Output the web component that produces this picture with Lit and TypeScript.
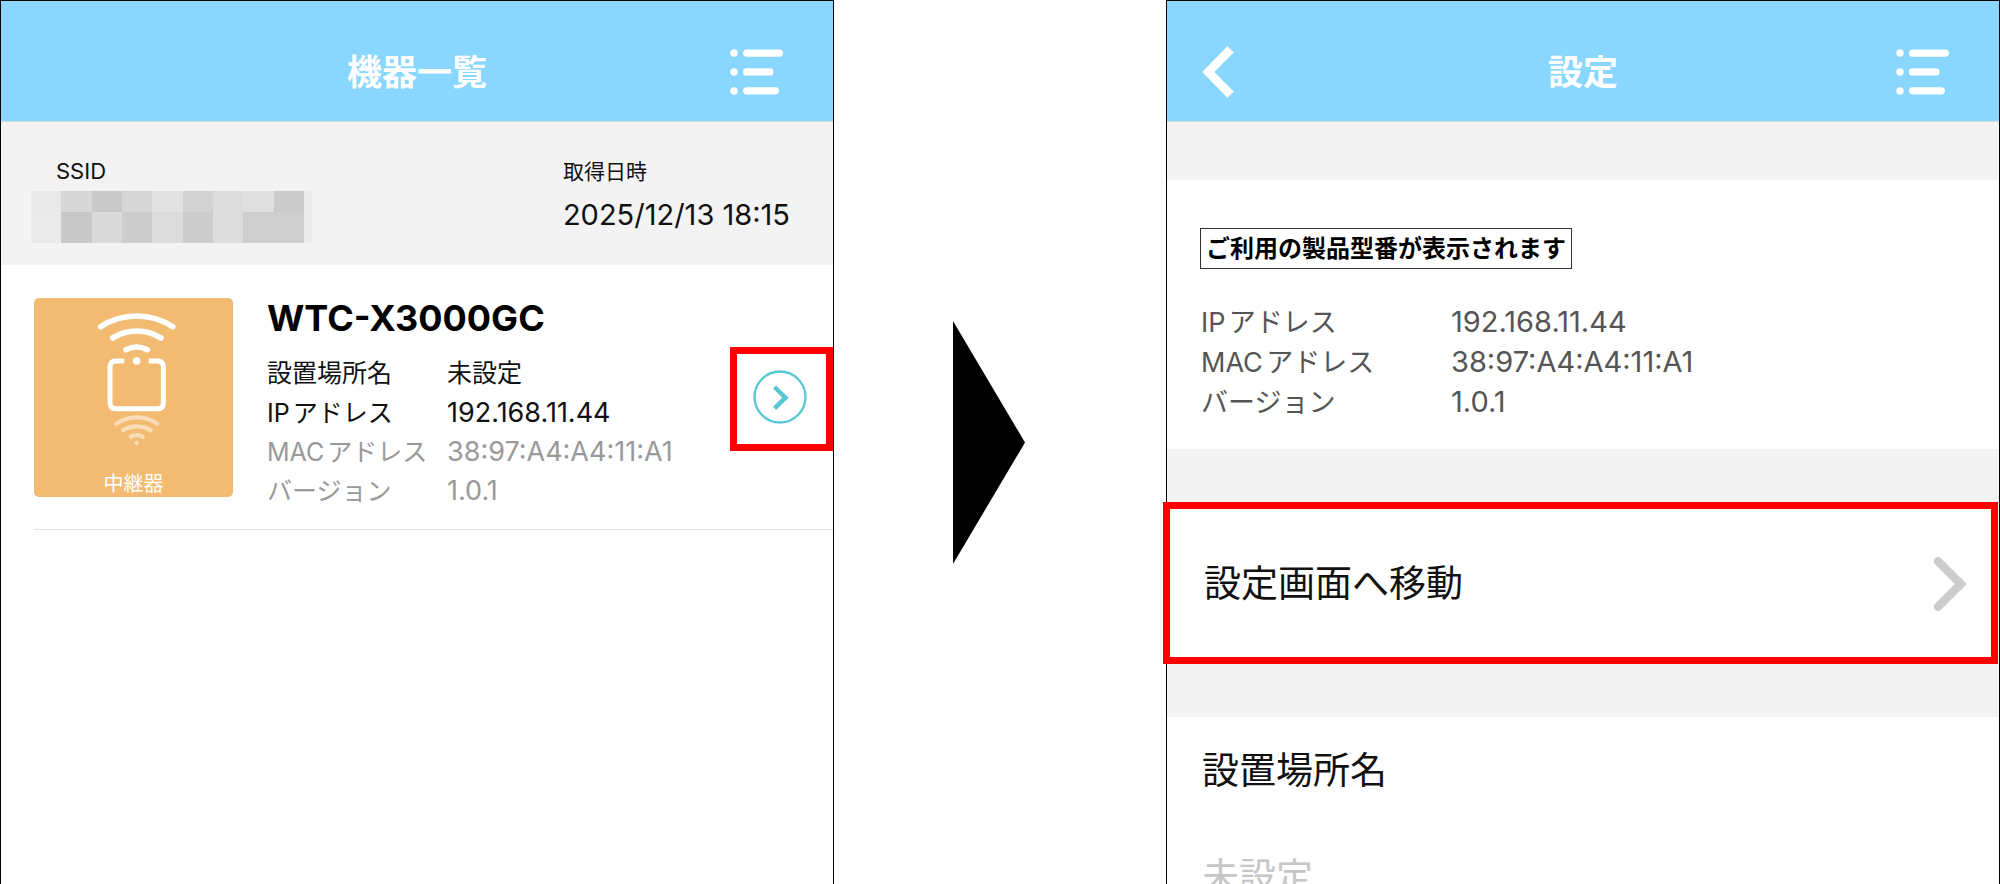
import { LitElement, html, css, svg } from "lit";
import { customElement, property } from "lit/decorators.js";

interface Field {
  name: string;
  value: string;
  muted?: boolean;
  numeric?: boolean;
}

const menuIcon = svg`
  <svg width="54" height="46" viewBox="0 0 54 46" fill="#fff" aria-hidden="true">
    <circle cx="4" cy="4" r="3.7" /><rect x="13" y="0.5" width="40" height="7.2" rx="3.6" />
    <circle cx="4" cy="23" r="3.7" /><rect x="13" y="19.3" width="30.5" height="7.2" rx="3.6" />
    <circle cx="4" cy="42" r="3.7" /><rect x="13" y="38.2" width="36" height="7.2" rx="3.6" />
  </svg>`;

@customElement("app-header")
export class AppHeader extends LitElement {
  @property() heading = "";
  @property({ type: Boolean }) back = false;

  static styles = css`
    header {
      display: grid;
      grid-template-columns: 1fr auto 1fr;
      align-items: center;
      box-sizing: border-box;
      height: 121px;
      padding: 21px 49px 0 35px;
      background: #89d7ff;
      border-bottom: 1px solid #cdd7e0;
    }
    .heading {
      grid-column: 2;
      margin: 0;
      /* balances the unequal side paddings */
      padding-left: 14px;
      font-size: 35px;
      line-height: 50px;
      font-weight: 700;
      color: #fff;
    }
    button {
      display: flex;
      padding: 0;
      border: 0;
      background: none;
      cursor: pointer;
    }
    .back {
      grid-column: 1;
      justify-self: start;
    }
    .menu {
      grid-column: 3;
      justify-self: end;
    }
  `;

  render() {
    return html`
      <header>
        ${this.back
          ? html`<button class="back" aria-label="戻る">
              <svg width="32" height="52" viewBox="0 0 32 52" fill="none" stroke="#fff" stroke-width="8.8" aria-hidden="true">
                <path d="M28.6 3.4 6.3 26 28.6 48.6" />
              </svg>
            </button>`
          : null}
        <h1 class="heading">${this.heading}</h1>
        <button class="menu" aria-label="メニュー">${menuIcon}</button>
      </header>
    `;
  }
}

@customElement("device-list")
export class DeviceList extends LitElement {
  private fields: Field[] = [
    { name: "設置場所名", value: "未設定" },
    { name: "IPアドレス", value: "192.168.11.44", numeric: true },
    { name: "MACアドレス", value: "38:97:A4:A4:11:A1", numeric: true, muted: true },
    { name: "バージョン", value: "1.0.1", numeric: true, muted: true },
  ];

  private mask = [
    "#e9e9e9", "#d7d7d7", "#c9c9c9", "#d6d6d6", "#e1e1e1", "#d2d2d2", "#dcdcdc", "#e0e0e0", "#cbcbcb", "#ebebeb",
    "#eaeaea", "#c8c8c8", "#dadada", "#cdcdcd", "#dbdbdb", "#cccccc", "#dcdcdc", "#cecece", "#cfcfcf", "#ebebeb",
  ];

  static styles = css`
    .strip {
      display: flex;
      justify-content: space-between;
      padding: 35px 43px 22px 30px;
      background: #f3f3f3;
      color: #111;
    }
    .label {
      font-size: 21px;
      line-height: 29px;
    }
    .ssid .label {
      padding-left: 25px;
      font-size: 22px;
    }
    .mask {
      display: grid;
      grid-template: 21px 31px / 30px 31px 30px 30px 31px 30px 30px 31px 30px 8px;
      margin-top: 5px;
    }
    .date {
      margin-top: 9px;
      font-size: 29px;
      line-height: 40px;
    }
    .list {
      margin: 0;
      padding: 0 0 0 33px;
      list-style: none;
    }
    .device {
      display: flex;
      align-items: flex-start;
      padding: 31px 0 19px;
      border-bottom: 1px solid #e4e4e4;
    }
    .tile {
      display: flex;
      flex-direction: column;
      flex: none;
      width: 199px;
      margin-top: 2px;
      padding-bottom: 1px;
      border-radius: 5px;
      background: #f3bb72;
      color: #fff;
      text-align: center;
      font-size: 20px;
      line-height: 24px;
    }
    .tile svg {
      display: block;
      margin-bottom: 14px;
    }
    .info {
      flex: 1;
      min-width: 0;
      padding-left: 34px;
    }
    .model {
      margin: 0 0 14px;
      font-size: 36px;
      line-height: 44px;
      font-weight: 700;
      color: #000;
    }
    .fields {
      display: grid;
      grid-template-columns: 180px 1fr;
      grid-auto-rows: 39px;
      align-items: baseline;
      margin: 0;
      font-size: 25px;
      line-height: 39px;
      color: #111;
      text-autospace: normal;
    }
    dd {
      margin: 0;
    }
    .numeric {
      font-size: 27px;
    }
    .muted {
      color: #999;
    }
    .open {
      display: flex;
      align-self: center;
      align-items: center;
      justify-content: center;
      box-sizing: border-box;
      width: 103px;
      height: 104px;
      margin-bottom: 8px;
      padding: 0 3px 4px 0;
      border: 7px solid #f00;
      background: none;
      cursor: pointer;
    }
  `;

  render() {
    return html`
      <app-header heading="機器一覧"></app-header>
      <section class="strip">
        <div class="ssid">
          <div class="label">SSID</div>
          <div class="mask" aria-hidden="true">
            ${this.mask.map((c) => html`<span style="background:${c}"></span>`)}
          </div>
        </div>
        <div>
          <div class="label">取得日時</div>
          <div class="date">2025/12/13 18:15</div>
        </div>
      </section>
      <ul class="list">
        <li class="device">
          <div class="tile">
            <svg width="199" height="160" viewBox="103 113 597 480" fill="none" stroke="#fff" stroke-linecap="round" aria-hidden="true">
              <g stroke-width="17">
                <path d="M303 199A198 198 0 0 1 519 199" />
                <path d="M339 233A135 135 0 0 1 484 233" />
                <path d="M379 268A72 72 0 0 1 443 268" />
              </g>
              <circle cx="411" cy="302" r="11.5" fill="#fff" stroke="none" />
              <path stroke-width="15" stroke-linecap="butt" d="M374 302H349Q331 302 331 320V427Q331 445 349 445H474Q491 445 491 427V320Q491 302 474 302H447" />
              <g opacity="0.5">
                <g stroke-width="13">
                  <path d="M350 490A109 109 0 0 1 473 490" />
                  <path d="M370 510A78 78 0 0 1 453 510" />
                  <path d="M394 529A37 37 0 0 1 429 529" />
                </g>
                <circle cx="411" cy="548" r="6.5" fill="#fff" stroke="none" />
              </g>
            </svg>
            中継器
          </div>
          <div class="info">
            <h2 class="model">WTC-X3000GC</h2>
            <dl class="fields">
              ${this.fields.map(
                (f) => html`<dt class=${f.muted ? "muted" : ""}>${f.name}</dt>
                  <dd class="${f.numeric ? "numeric" : ""} ${f.muted ? "muted" : ""}">${f.value}</dd>`
              )}
            </dl>
          </div>
          <button class="open" aria-label="詳細">
            <svg width="54" height="54" viewBox="0 0 54 54" fill="none" stroke="#57c8d3" aria-hidden="true">
              <circle cx="27" cy="27" r="25.5" stroke-width="2.3" />
              <path d="M21.5 17 32.5 27.7 21.5 38.4" stroke-width="4.5" />
            </svg>
          </button>
        </li>
      </ul>
    `;
  }
}

@customElement("device-settings")
export class DeviceSettings extends LitElement {
  private fields: Field[] = [
    { name: "IPアドレス", value: "192.168.11.44" },
    { name: "MACアドレス", value: "38:97:A4:A4:11:A1" },
    { name: "バージョン", value: "1.0.1" },
  ];

  static styles = css`
    .body {
      padding-top: 58px;
      background: #f3f3f3;
    }
    .summary {
      padding: 48px 33px 27px;
      background: #fff;
    }
    .model {
      display: inline-block;
      box-sizing: border-box;
      margin: 0 0 33px;
      padding: 0 5px;
      border: 1px solid #333;
      font-size: 24px;
      line-height: 39px;
      font-weight: 700;
      color: #000;
      vertical-align: top;
    }
    .fields {
      display: grid;
      grid-template-columns: 250px 1fr;
      grid-auto-rows: 40px;
      align-items: baseline;
      margin: 0;
      padding-left: 1px;
      font-size: 27px;
      line-height: 40px;
      color: #555;
      text-autospace: normal;
    }
    dd {
      margin: 0;
      font-size: 29px;
    }
    .go {
      display: flex;
      align-items: center;
      justify-content: space-between;
      box-sizing: border-box;
      width: calc(100% + 3px);
      height: 162px;
      /* the frame reaches over the panel's left edge */
      margin: 53px 1px 53px -4px;
      padding: 1px 24px 0 34px;
      border: 7px solid #f00;
      background: #fff;
      font: inherit;
      font-size: 37px;
      line-height: 50px;
      color: #111;
      cursor: pointer;
    }
    .place {
      display: flex;
      flex-direction: column;
      gap: 56px;
      padding: 29px 35px;
      background: #fff;
      font-size: 37px;
      line-height: 50px;
      color: #111;
    }
    .place input {
      height: 50px;
      padding: 0;
      border: 0;
      outline: 0;
      background: none;
      font: inherit;
      color: #111;
    }
    .place input::placeholder {
      color: #c6c6c6;
      opacity: 1;
    }
  `;

  render() {
    return html`
      <app-header heading="設定" back></app-header>
      <div class="body">
        <section class="summary">
          <h2 class="model">ご利用の製品型番が表示されます</h2>
          <dl class="fields">
            ${this.fields.map((f) => html`<dt>${f.name}</dt><dd>${f.value}</dd>`)}
          </dl>
        </section>
        <button class="go">
          設定画面へ移動
          <svg width="34" height="56" viewBox="0 0 34 56" fill="none" stroke="#cdcdcd" stroke-width="8.6" stroke-linecap="round" aria-hidden="true">
            <path d="M5 5.2 27.8 28 5 50.8" />
          </svg>
        </button>
        <section class="place">
          <label for="place">設置場所名</label>
          <input id="place" type="text" placeholder="未設定" />
        </section>
      </div>
    `;
  }
}

@customElement("app-root")
export class AppRoot extends LitElement {
  static styles = css`
    :host {
      display: grid;
      grid-template-columns: minmax(0, 1fr) 332px minmax(0, 1fr);
      grid-template-rows: 100%;
      height: 100vh;
      overflow: hidden;
      background: #fff;
      font-family: Inter, "Noto Sans CJK JP", sans-serif;
    }
    .screen {
      box-sizing: border-box;
      border: 1px solid #000;
      border-bottom: 0;
    }
    .next {
      display: flex;
      align-items: center;
      justify-content: center;
      padding-right: 22px;
    }
  `;

  render() {
    return html`
      <device-list class="screen"></device-list>
      <div class="next">
        <svg width="72" height="243" viewBox="0 0 72 243" aria-hidden="true">
          <path d="M0 0 72 121.5 0 243Z" />
        </svg>
      </div>
      <device-settings class="screen"></device-settings>
    `;
  }
}
